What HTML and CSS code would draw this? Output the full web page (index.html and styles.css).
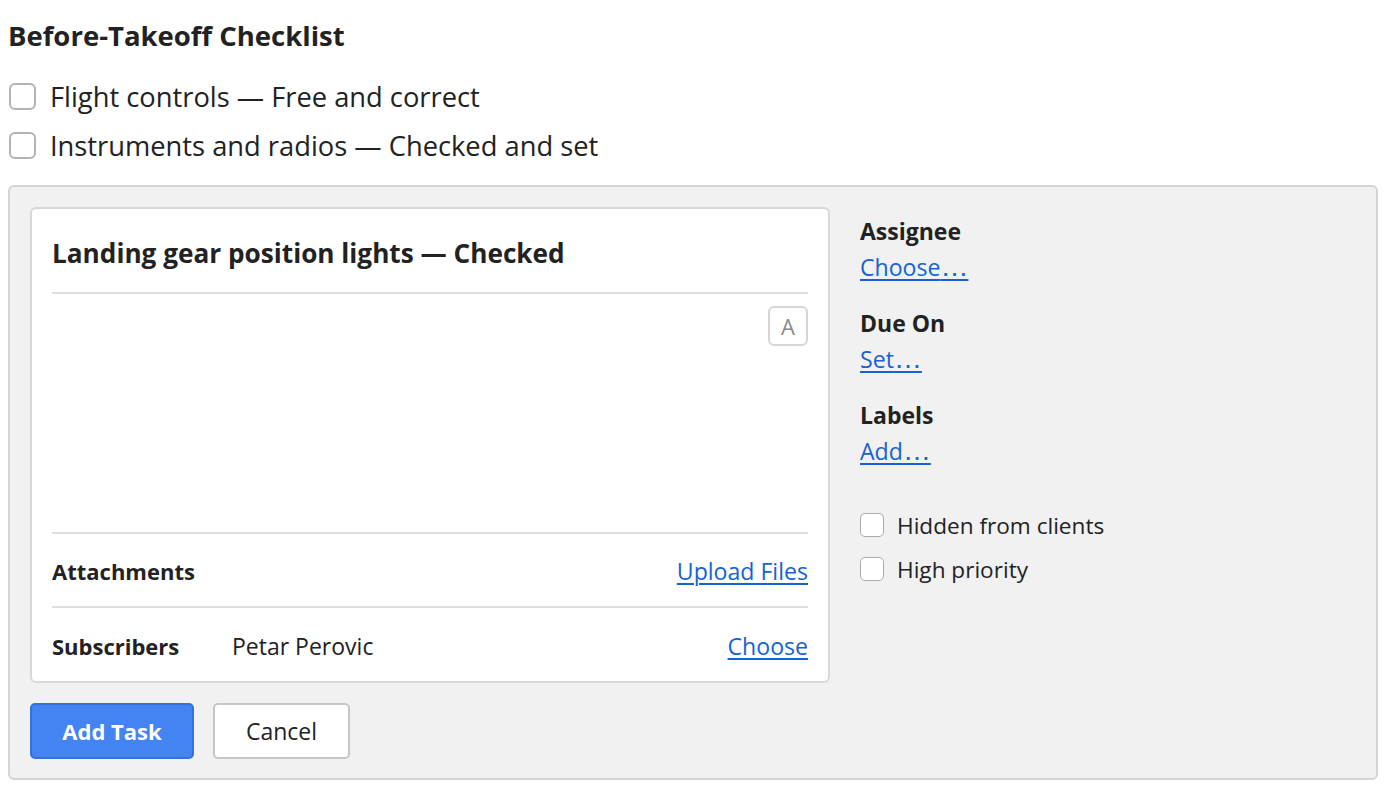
FILE: index.html
```html
<!DOCTYPE html>
<html>
<head>
<meta charset="utf-8">
<link rel="stylesheet" href="styles.css">
</head>
<body>
<h1 class="title">Before-Takeoff Checklist</h1>
<ul class="checklist">
  <li class="check-item"><span class="box"></span><span>Flight controls — Free and correct</span></li>
  <li class="check-item"><span class="box"></span><span>Instruments and radios — Checked and set</span></li>
</ul>
<div class="panel">
  <div class="main">
    <div class="card">
      <div class="card-title">Landing gear position lights — Checked</div>
      <div class="editor">
        <span class="fmt-btn">A</span>
      </div>
      <div class="row">
        <span class="row-label">Attachments</span>
        <span class="row-value"></span>
        <a class="link" href="#">Upload Files</a>
      </div>
      <div class="row row-last">
        <span class="row-label">Subscribers</span>
        <span class="row-value">Petar Perovic</span>
        <a class="link" href="#">Choose</a>
      </div>
    </div>
    <div class="actions">
      <button class="btn btn-primary">Add Task</button>
      <button class="btn btn-secondary">Cancel</button>
    </div>
  </div>
  <div class="side">
    <div class="field">
      <div class="field-label">Assignee</div>
      <a class="link" href="#">Choose<span class="ell">…</span></a>
    </div>
    <div class="field">
      <div class="field-label">Due On</div>
      <a class="link" href="#">Set<span class="ell">…</span></a>
    </div>
    <div class="field">
      <div class="field-label">Labels</div>
      <a class="link" href="#">Add<span class="ell">…</span></a>
    </div>
    <div class="options">
      <label class="option"><span class="box small"></span><span>Hidden from clients</span></label>
      <label class="option"><span class="box small"></span><span>High priority</span></label>
    </div>
  </div>
</div>
</body>
</html>
```
FILE: styles.css
```css
* { box-sizing: border-box; }
body {
  margin: 8px;
  font-family: "Open Sans", "Noto Sans", sans-serif;
  color: #222;
  background: #fff;
}
.title {
  margin: 0;
  padding-top: 12px;
  font-size: 27.5px;
  font-weight: 700;
  line-height: 32px;
  height: 64px;
}
.checklist {
  list-style: none;
  margin: 0;
  padding: 0;
}
.check-item {
  display: flex;
  align-items: center;
  gap: 14px;
  height: 49px;
  font-size: 27.3px;
}
.box {
  flex: none;
  width: 27px;
  height: 27px;
  border: 2px solid #b3b3b3;
  border-radius: 6px;
  background: #fff;
  margin-left: 1px;
}
.box.small {
  width: 24px;
  height: 24px;
  border-width: 1px;
  border-color: #aaa;
  border-radius: 5px;
  margin-left: 0;
}
.panel {
  margin-top: 15px;
  display: flex;
  gap: 30px;
  background: #f1f1f1;
  border: 2px solid #d4d4d4;
  border-radius: 6px;
  padding: 20px 20px 19px;
}
.main {
  width: 800px;
  flex: none;
}
.card {
  background: #fff;
  border: 2px solid #d8d8d8;
  border-radius: 6px;
  padding: 0 20px;
}
.card-title {
  font-size: 26.2px;
  font-weight: 700;
  line-height: 40px;
  padding: 24px 0 19px;
  border-bottom: 2px solid #dfdfdf;
}
.editor {
  height: 240px;
  display: flex;
  justify-content: flex-end;
  align-items: flex-start;
  padding-top: 12px;
  border-bottom: 2px solid #dfdfdf;
}
.fmt-btn {
  width: 40px;
  height: 40px;
  border: 2px solid #d6d6d6;
  border-radius: 6px;
  display: flex;
  align-items: center;
  justify-content: center;
  font-size: 22px;
  color: #8a8a8a;
}
.row {
  display: flex;
  align-items: center;
  height: 74px;
  font-size: 23px;
  border-bottom: 2px solid #dfdfdf;
  padding-top: 2px;
}
.row-last {
  border-bottom: none;
  height: 73px;
}
.row-label {
  font-weight: 700;
  font-size: 22px;
  width: 180px;
}
.row-value {
  flex: 1;
}
.link {
  color: #1662d4;
  text-decoration: underline;
  text-underline-offset: 3px;
  text-decoration-thickness: 1.5px;
  font-size: 23.1px;
}
.ell {
  font-family: "Liberation Sans", sans-serif;
  font-size: 28px;
  line-height: 1;
}
.actions {
  display: flex;
  gap: 19px;
  margin-top: 20px;
}
.btn {
  height: 56px;
  border-radius: 5px;
  font-family: inherit;
  font-size: 22px;
  padding: 0;
}
.btn-primary {
  width: 164px;
  background: #4384f2;
  border: 2px solid #3472db;
  color: #fff;
  font-weight: 700;
}
.btn-secondary {
  width: 137px;
  background: #fff;
  border: 2px solid #c6c6c6;
  color: #222;
  font-size: 23px;
}
.side {
  flex: 1;
  padding-top: 6px;
}
.field {
  display: flex;
  flex-direction: column;
  align-items: flex-start;
  margin-bottom: 20px;
}
.field-label {
  font-size: 23px;
  font-weight: 700;
  line-height: 36px;
}
.field .link {
  line-height: 36px;
  height: 36px;
}
.options {
  padding-top: 14px;
}
.option {
  display: flex;
  align-items: center;
  gap: 13px;
  height: 44px;
  font-size: 22.6px;
}
```
